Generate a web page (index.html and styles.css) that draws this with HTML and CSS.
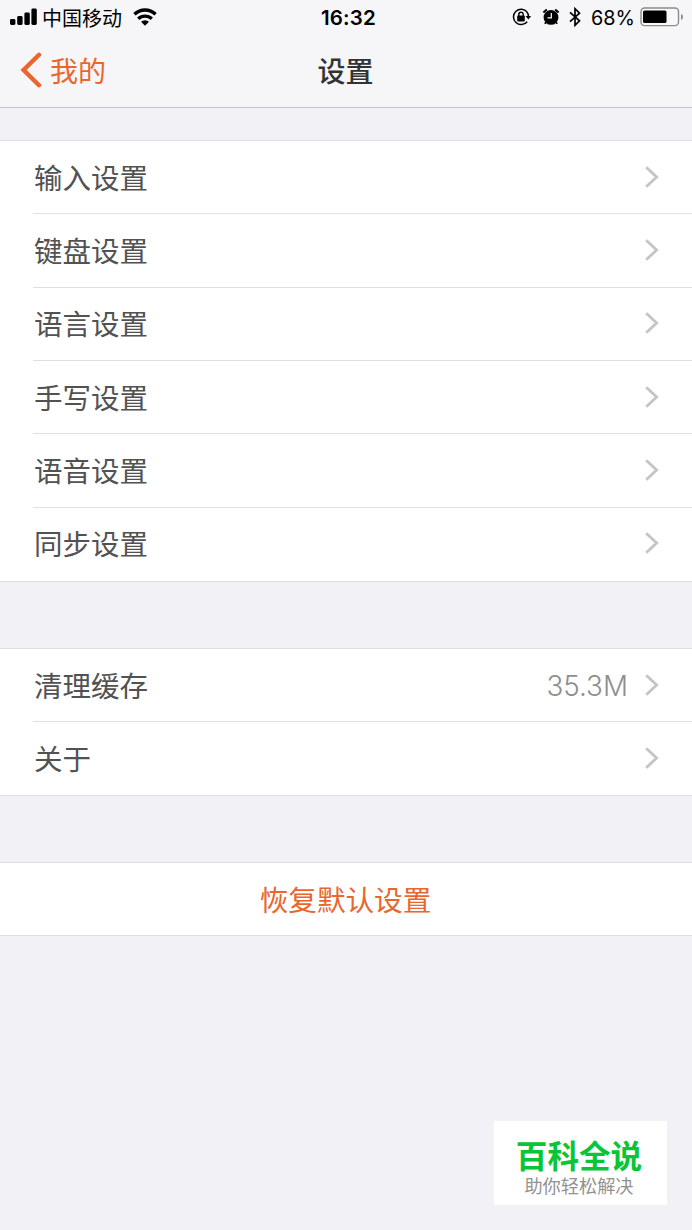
FILE: index.html
```html
<!DOCTYPE html>
<html lang="zh-CN">
<head>
<meta charset="utf-8">
<title>设置</title>
<link rel="stylesheet" href="styles.css">
</head>
<body>
<svg class="defs" width="0" height="0"><symbol id="chev" viewBox="0 0 14 22"><path d="M1.2 1.2 11.6 11 1.2 20.8" fill="none" stroke="#c5c5c9" stroke-width="2.9"/></symbol></svg>
<header class="top">
  <div class="status">
    <div class="side">
      <svg class="signal" width="28" height="18" viewBox="0 0 28 18"><rect x="0" y="11" width="5.4" height="6" rx="1.4"/><rect x="7.2" y="8" width="5.4" height="9" rx="1.4"/><rect x="14.4" y="4.5" width="5.4" height="12.5" rx="1.4"/><rect x="21.4" y="0.5" width="5.4" height="16.5" rx="1.4"/></svg>
      <span class="carrier">中国移动</span>
      <svg class="wifi" width="24" height="18" viewBox="0 0 24 18"><g fill="none" stroke="#000" stroke-width="3.3"><path d="M1.4 6.3a15.2 15.2 0 0 1 21.2 0"/><path d="M5.2 10.8a9.8 9.8 0 0 1 13.6 0"/></g><path d="M8 13.8a5.7 5.7 0 0 1 8 0L12 17.8z"/></svg>
    </div>
    <span class="time">16:32</span>
    <div class="side right">
      <svg class="lock" width="20" height="18" viewBox="0 0 20 18"><path d="M15.2 4.1A7.7 7.7 0 1 0 15.2 13.7M14.3 3.2a7.6 7.6 0 0 1 2.2 5.8" fill="none" stroke="#000" stroke-width="1.5"/><path d="M13.6 8h5.6l-2.8 3.6z"/><rect x="5.2" y="7.6" width="7.6" height="5.8" rx=".8"/><path d="M6.8 8V6.4a2.2 2.2 0 0 1 4.4 0V8" fill="none" stroke="#000" stroke-width="1.4"/></svg>
      <svg class="alarm" width="18" height="18" viewBox="0 0 18 18"><circle cx="9" cy="9.4" r="7.4"/><path d="M1.4 4.6 4.8 1.6M16.6 4.6l-3.4-3" stroke="#000" stroke-width="2"/><path d="m4.2 14-1.4 1.8m11-1.8 1.4 1.8" stroke="#000" stroke-width="1.8"/><path d="M9.3 5.1v4.8H5.5" fill="none" stroke="#fff" stroke-width="1.2"/></svg>
      <svg class="bt" width="12" height="20" viewBox="0 0 12 20"><path d="m1 5.4 9.5 8.4L6 18.3V1.7l4.5 4.5L1 14.6" fill="none" stroke="#000" stroke-width="1.7"/></svg>
      <span class="pct">68%</span>
      <svg class="battery" width="44" height="20" viewBox="0 0 44 20"><rect x="1" y="1" width="37.5" height="17.6" rx="3.6" fill="#f8f8f9" stroke="#8c8c8e" stroke-width="1.4"/><rect x="3" y="3.5" width="23.5" height="12.6" rx="1.6"/><path d="M41 7v6q2-.7 2-3t-2-3" fill="#8c8c8e"/></svg>
    </div>
  </div>
  <nav class="nav">
    <a class="back"><svg width="22" height="36" viewBox="0 0 22 36"><path d="M19 2.8 3.6 18 19 33.2" fill="none" stroke="#e9662f" stroke-width="4.4" stroke-linecap="round"/></svg><span>我的</span></a>
    <h1 class="title">设置</h1>
    <span></span>
  </nav>
</header>
<main>
  <ul class="group six">
    <li class="row"><span>输入设置</span><svg class="chev"><use href="#chev"/></svg></li>
    <li class="row"><span>键盘设置</span><svg class="chev"><use href="#chev"/></svg></li>
    <li class="row"><span>语言设置</span><svg class="chev"><use href="#chev"/></svg></li>
    <li class="row"><span>手写设置</span><svg class="chev"><use href="#chev"/></svg></li>
    <li class="row"><span>语音设置</span><svg class="chev"><use href="#chev"/></svg></li>
    <li class="row"><span>同步设置</span><svg class="chev"><use href="#chev"/></svg></li>
  </ul>
  <ul class="group two">
    <li class="row"><span>清理缓存</span><span class="value">35.3M</span><svg class="chev"><use href="#chev"/></svg></li>
    <li class="row"><span>关于</span><svg class="chev"><use href="#chev"/></svg></li>
  </ul>
  <div class="group reset">恢复默认设置</div>
</main>
<aside class="badge"><strong>百科全说</strong><span>助你轻松解决</span></aside>
</body>
</html>
```
FILE: styles.css
```css
* { box-sizing: border-box; }
body {
  margin: 0;
  height: 1230px;
  overflow: hidden;
  background: #f1f1f6;
  color: #525252;
  font-family: "Noto Sans CJK SC", sans-serif;
}
.defs { position: absolute; }
svg { flex: none; }
.top { height: 108px; background: #f6f6f8; border-bottom: 1px solid #c4c4cb; }
.status {
  height: 34px;
  display: grid;
  grid-template-columns: 1fr auto 1fr;
  align-items: center;
  padding: 0 8px 0 10px;
  color: #000;
}
.side { display: flex; align-items: center; }
.right { justify-content: flex-end; }
.carrier { font-size: 20px; line-height: 30px; margin-left: 4px; padding-top: 1px; }
.wifi { margin-left: 11px; }
.time { font: 600 20.5px/30px Inter, sans-serif; letter-spacing: .2px; padding: 2px 0 0 3px; }
.alarm { margin-left: 10px; }
.bt { margin-left: 9px; }
.pct { font: 400 19.8px/30px Inter, sans-serif; margin-left: 10px; padding-top: 2px; }
.battery { margin-left: 5px; }
.nav {
  height: 73px;
  display: grid;
  grid-template-columns: 1fr auto 1fr;
  align-items: center;
  padding: 0 21px 2px 20px;
}
.back { display: flex; align-items: center; color: #e9662f; font-size: 28px; line-height: 40px; gap: 8px; }
.title { margin: 0; font-size: 28px; line-height: 40px; font-weight: 500; color: #333; }
.group {
  list-style: none;
  margin: 32px 0 0;
  padding: 0;
  background: #fff;
  border: solid #dedee2;
  border-width: 1px 0;
  display: grid;
  grid-auto-rows: 1fr;
  font-size: 28.5px;
}
.six { height: 442px; }
.two { height: 148px; margin-top: 66px; }
.row {
  margin-left: 33px;
  padding: 0 33px 1px 0;
  display: flex;
  align-items: center;
  line-height: 40px;
  border-bottom: 1px solid #e0e0e3;
}
.row:last-child { border-bottom-color: transparent; }
.row > span:first-child { flex: 1; padding-left: 1px; }
.value { font-family: Inter, sans-serif; font-size: 27.8px; color: #8e8e8e; margin-right: 17px; font-weight: 300; padding-top: 2px; }
.chev { width: 14px; height: 22px; }
.reset { height: 74px; margin-top: 66px; padding: 0 1px 1px 0; place-items: center; color: #e9662f; font-size: 28.6px; line-height: 40px; }
.badge {
  position: absolute;
  left: 494px;
  top: 1121px;
  width: 173px;
  height: 84px;
  background: #fff;
  display: flex;
  flex-direction: column;
  align-items: center;
  padding: 14px 3px 0 0;
}
.badge strong { color: #0ac535; font-size: 31.6px; line-height: 38px; font-weight: 700; }
.badge span { color: #929292; font-size: 18.2px; line-height: 24px; }
```
